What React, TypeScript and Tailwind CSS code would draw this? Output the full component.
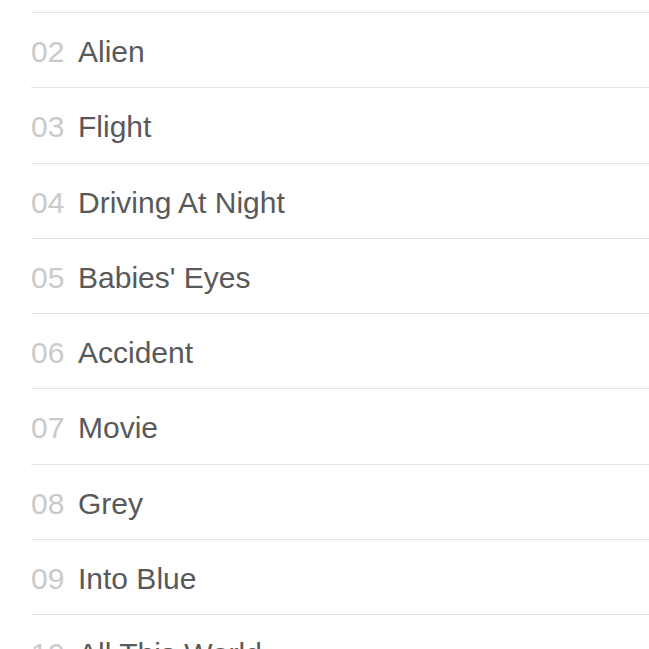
import React from 'react';

const tracks = [
  { no: '02', title: 'Alien' },
  { no: '03', title: 'Flight' },
  { no: '04', title: 'Driving At Night' },
  { no: '05', title: "Babies' Eyes" },
  { no: '06', title: 'Accident' },
  { no: '07', title: 'Movie' },
  { no: '08', title: 'Grey' },
  { no: '09', title: 'Into Blue' },
  { no: '10', title: 'All This World' },
];

const App = () => {
  return (
    <div className="h-[649px] w-[649px] overflow-hidden bg-white pl-[31px] font-['Liberation_Sans',Arial,sans-serif]">
      <div className="h-[13px] border-b border-[#e3e3e3]" />
      {tracks.map((t) => (
        <div
          key={t.no}
          className="flex h-[75.25px] items-center border-b border-[#e3e3e3] pt-[4px]"
        >
          <span className="w-[47px] text-[30px] leading-none text-[#cacaca]">{t.no}</span>
          <span className="text-[30px] leading-none text-[#595959]">{t.title}</span>
        </div>
      ))}
    </div>
  );
};

export default App;
